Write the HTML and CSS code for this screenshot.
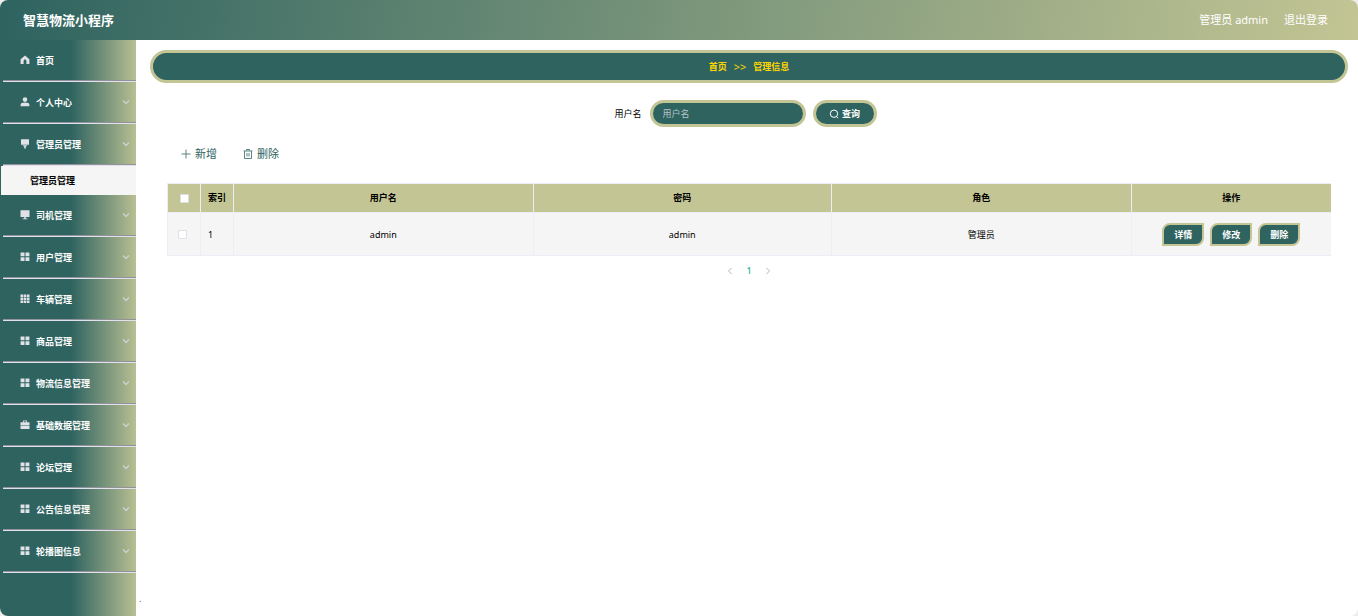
FILE: index.html
```html
<!DOCTYPE html>
<html lang="zh-CN">
<head>
<meta charset="utf-8">
<title>智慧物流小程序</title>
<link rel="stylesheet" href="styles.css">
</head>
<body>
<svg class="sprite" aria-hidden="true">
  <symbol id="grid4" viewBox="0 0 10 10"><path d="M0.6 0.4h3.9v3.9h-3.9zM5.5 0.4h3.9v3.9h-3.9zM0.6 5.2h3.9v3.9h-3.9zM5.5 5.2h3.9v3.9h-3.9z"/></symbol>
  <symbol id="grid9" viewBox="0 0 10 10"><path d="M0.5 .5h2.6v2.4H0.5zM3.7 .5h2.6v2.4H3.7zM6.9 .5h2.6v2.4H6.9zM0.5 3.5h2.6v2.4H0.5zM3.7 3.5h2.6v2.4H3.7zM6.9 3.5h2.6v2.4H6.9zM0.5 6.5h2.6v2.4H0.5zM3.7 6.5h2.6v2.4H3.7zM6.9 6.5h2.6v2.4H6.9z"/></symbol>
  <symbol id="home" viewBox="0 0 10 10"><path d="M5 0.5 9.4 4.3V9H6.4V6a1.4 1.4 0 0 0-2.8 0V9H0.6V4.3z"/></symbol>
  <symbol id="user" viewBox="0 0 10 10"><circle cx="5" cy="2.6" r="2.3"/><path d="M0.6 9.2V8C0.6 6.4 2 5.6 5 5.6s4.4.8 4.4 2.4v1.2z"/></symbol>
  <symbol id="board" viewBox="0 0 10 10"><path d="M1 .2h8v5.6H1zM2.5 6.2h5L5.8 7.7v1.8H4.2V7.7z"/></symbol>
  <symbol id="monitor" viewBox="0 0 10 10"><path d="M.5.2h9v6.9h-9zM4.2 7.1h1.6v1.3h1.7v.8h-5v-.8h1.7z"/></symbol>
  <symbol id="case" viewBox="0 0 10 10"><path d="M3 2.3V.5h4v1.8h2.5v3H.5v-3zM3.8 2.3h2.4v-1H3.8zM.5 5.8h9v3.3h-9z" fill-rule="evenodd"/></symbol>
  <symbol id="down" viewBox="0 0 8 8"><path d="M1 2.5 4 5.5 7 2.5" fill="none" stroke="currentColor" stroke-width="1.3"/></symbol>
</svg>
<div class="app">
  <header class="topbar">
    <h1 class="brand">智慧物流小程序</h1>
    <div class="account"><span>管理员 admin</span><a class="logout" href="#">退出登录</a></div>
  </header>
  <div class="body">
    <nav class="sidebar">
      <a class="item" href="#"><svg class="icon"><use href="#home"/></svg><span class="name">首页</span></a>
      <a class="item" href="#"><svg class="icon"><use href="#user"/></svg><span class="name">个人中心</span><svg class="arrow"><use href="#down"/></svg></a>
      <a class="item" href="#"><svg class="icon"><use href="#board"/></svg><span class="name">管理员管理</span><svg class="arrow"><use href="#down"/></svg></a>
      <a class="subitem" href="#">管理员管理</a>
      <a class="item" href="#"><svg class="icon"><use href="#monitor"/></svg><span class="name">司机管理</span><svg class="arrow"><use href="#down"/></svg></a>
      <a class="item" href="#"><svg class="icon"><use href="#grid4"/></svg><span class="name">用户管理</span><svg class="arrow"><use href="#down"/></svg></a>
      <a class="item" href="#"><svg class="icon"><use href="#grid9"/></svg><span class="name">车辆管理</span><svg class="arrow"><use href="#down"/></svg></a>
      <a class="item" href="#"><svg class="icon"><use href="#grid4"/></svg><span class="name">商品管理</span><svg class="arrow"><use href="#down"/></svg></a>
      <a class="item" href="#"><svg class="icon"><use href="#grid4"/></svg><span class="name">物流信息管理</span><svg class="arrow"><use href="#down"/></svg></a>
      <a class="item" href="#"><svg class="icon"><use href="#case"/></svg><span class="name">基础数据管理</span><svg class="arrow"><use href="#down"/></svg></a>
      <a class="item" href="#"><svg class="icon"><use href="#grid4"/></svg><span class="name">论坛管理</span><svg class="arrow"><use href="#down"/></svg></a>
      <a class="item" href="#"><svg class="icon"><use href="#grid4"/></svg><span class="name">公告信息管理</span><svg class="arrow"><use href="#down"/></svg></a>
      <a class="item" href="#"><svg class="icon"><use href="#grid4"/></svg><span class="name">轮播图信息</span><svg class="arrow"><use href="#down"/></svg></a>
    </nav>
    <main class="main">
      <div class="crumbs"><a href="#">首页</a><span class="sep">&gt;&gt;</span><span>管理信息</span></div>
      <form class="search">
        <label for="name">用户名</label>
        <input class="field" id="name" type="text" placeholder="用户名">
        <button class="query" type="button"><svg class="icon" viewBox="0 0 10 10"><circle cx="5" cy="4.7" r="3.7"/><path d="M7.4 7.4 9 9.2"/></svg>查询</button>
      </form>
      <div class="tools">
        <button class="tool" type="button"><svg class="tool-icon" viewBox="0 0 10 10"><path d="M5 .5v9M.5 5h9"/></svg>新增</button>
        <button class="tool" type="button"><svg class="tool-icon" viewBox="0 0 10 10"><path d="M.5 2h9M3.5 2V.5h3V2M1.5 2v7.5h7V2M4 4v3.5M6 4v3.5"/></svg>删除</button>
      </div>
      <table class="grid">
        <colgroup><col class="narrow"><col class="narrow"><col><col><col><col class="ops"></colgroup>
        <thead><tr><th><input class="check" type="checkbox" aria-label="全选"></th><th>索引</th><th>用户名</th><th>密码</th><th>角色</th><th>操作</th></tr></thead>
        <tbody><tr>
          <td class="pick"><input class="check" type="checkbox" aria-label="选择"></td><td class="index">1</td><td>admin</td><td>admin</td><td>管理员</td>
          <td><div class="actions"><button class="action" type="button">详情</button><button class="action" type="button">修改</button><button class="action" type="button">删除</button></div></td>
        </tr></tbody>
      </table>
      <div class="pager">
        <button type="button" aria-label="上一页"><svg viewBox="0 0 8 8"><path d="M5.5 1 2.5 4l3 3"/></svg></button>
        <button class="current" type="button">1</button>
        <button type="button" aria-label="下一页"><svg viewBox="0 0 8 8"><path d="m2.5 1 3 3-3 3"/></svg></button>
      </div>
      <footer class="foot">.</footer>
    </main>
  </div>
</div>
</body>
</html>
```
FILE: styles.css
```css
* { box-sizing: border-box; }
body {
  margin: 0;
  background: #eee;
  color: #000;
  font: 9px/14px "Noto Sans", "Noto Sans CJK SC", sans-serif;
}
a { color: inherit; text-decoration: none; }
button, input { font: inherit; margin: 0; }
button { cursor: pointer; }
.sprite { display: none; }
.app {
  display: flex;
  flex-direction: column;
  min-height: 100vh;
  border-radius: 8px;
  overflow: hidden;
  background: #fff;
}
.topbar {
  display: flex;
  align-items: center;
  justify-content: space-between;
  height: 40px;
  padding: 0 30px 0 23px;
  color: #fff;
  background: linear-gradient(100deg, #2e6360, #c3c594);
}
.brand { margin: 0; font-size: 13px; line-height: 20px; font-weight: 700; }
.account { display: flex; gap: 16px; font-size: 11px; }
.body { display: flex; flex: 1; }
.sidebar {
  flex: none;
  width: 136px;
  background: linear-gradient(90deg, #2e6360 52%, #b9bf92);
}
.item {
  display: flex;
  align-items: center;
  height: 42px;
  margin-left: 3px;
  padding: 0 6px 0 17px;
  color: #fff;
  font-weight: 700;
  border-bottom: 2px groove #e1e1ee;
}
.name { padding-top: 2px; }
.icon { flex: none; width: 10px; height: 10px; margin-right: 6px; fill: #e1e2e8; }
.arrow { width: 8px; height: 8px; margin-left: auto; color: #c9d3d0; }
.subitem {
  display: flex;
  align-items: center;
  height: 29px;
  margin-left: 1px;
  padding-left: 29px;
  background: #f5f5f5;
  font-weight: 700;
}
.main {
  display: flex;
  flex-direction: column;
  flex: 1;
  min-width: 0;
  padding: 10px 10px 10px 14px;
}
.crumbs {
  display: flex;
  align-items: center;
  justify-content: center;
  gap: 7px;
  height: 33px;
  padding-top: 1px;
  border: 3px solid #c3c594;
  border-radius: 17px;
  background: #2e6360;
  color: #ffd700;
  font-weight: 700;
}
.sep { font-size: 11px; font-weight: 400; }
.search {
  display: flex;
  align-items: center;
  justify-content: center;
  margin: 17px 7px 0 0;
}
.field {
  width: 156px;
  height: 27px;
  margin: 0 7px 0 8px;
  padding: 0 10px;
  border: 3px solid #c3c594;
  border-radius: 14px;
  background: #2e6360;
  color: #fff;
}
.field::placeholder { color: #b5c4cb; opacity: 1; }
.query {
  display: flex;
  align-items: center;
  justify-content: center;
  width: 64px;
  height: 27px;
  padding: 1px 0 0;
  border: 3px solid #c3c594;
  border-radius: 14px;
  background: #2e6360;
  color: #fff;
  font-weight: 700;
}
.query .icon { margin-right: 3px; fill: none; stroke: #fff; }
.tools { display: flex; gap: 26px; margin: 19px 0 0 31px; }
.tool {
  display: flex;
  align-items: center;
  gap: 4px;
  padding: 0;
  border: 0;
  background: none;
  color: #2e6360;
  font-size: 11px;
  line-height: 16px;
}
.tool-icon { width: 10px; height: 10px; fill: none; stroke: #5f8583; }
.grid {
  min-width: calc(100% - 34px);
  margin: 21px 17px 0;
  table-layout: fixed;
  border-collapse: collapse;
}
.grid th, .grid td {
  padding: 0;
  border: 1px solid #ebeef5;
  border-right: 0;
  text-align: center;
}
.grid th { height: 29px; background: #c3c594; }
.grid td { height: 43px; padding-top: 1px; background: #f5f5f5; }
.grid .index { padding-left: 7px; text-align: left; }
.grid .pick { padding-right: 3px; }
.narrow { width: 33px; }
.ops { width: 200px; }
.check {
  appearance: none;
  display: block;
  width: 9px;
  height: 9px;
  margin: 0 auto;
  border: 1px solid #dcdfe6;
  border-radius: 1px;
  background: #fff;
}
.actions { display: flex; justify-content: center; gap: 6px; }
.action {
  width: 42px;
  height: 23px;
  padding: 0;
  border: 2px solid #c3c594;
  border-radius: 8px 0;
  background: #2e6360;
  color: #fff;
  font-weight: 700;
}
.pager { display: flex; justify-content: center; margin-top: 7px; }
.pager button {
  display: flex;
  align-items: center;
  justify-content: center;
  width: 19px;
  height: 16px;
  padding: 0;
  border: 0;
  background: none;
}
.pager .current { color: #18b38f; font-weight: 500; }
.pager svg { width: 8px; height: 8px; fill: none; stroke: #b4b8c2; }
.foot { margin: auto auto 0 -11px; color: #555; }
```
